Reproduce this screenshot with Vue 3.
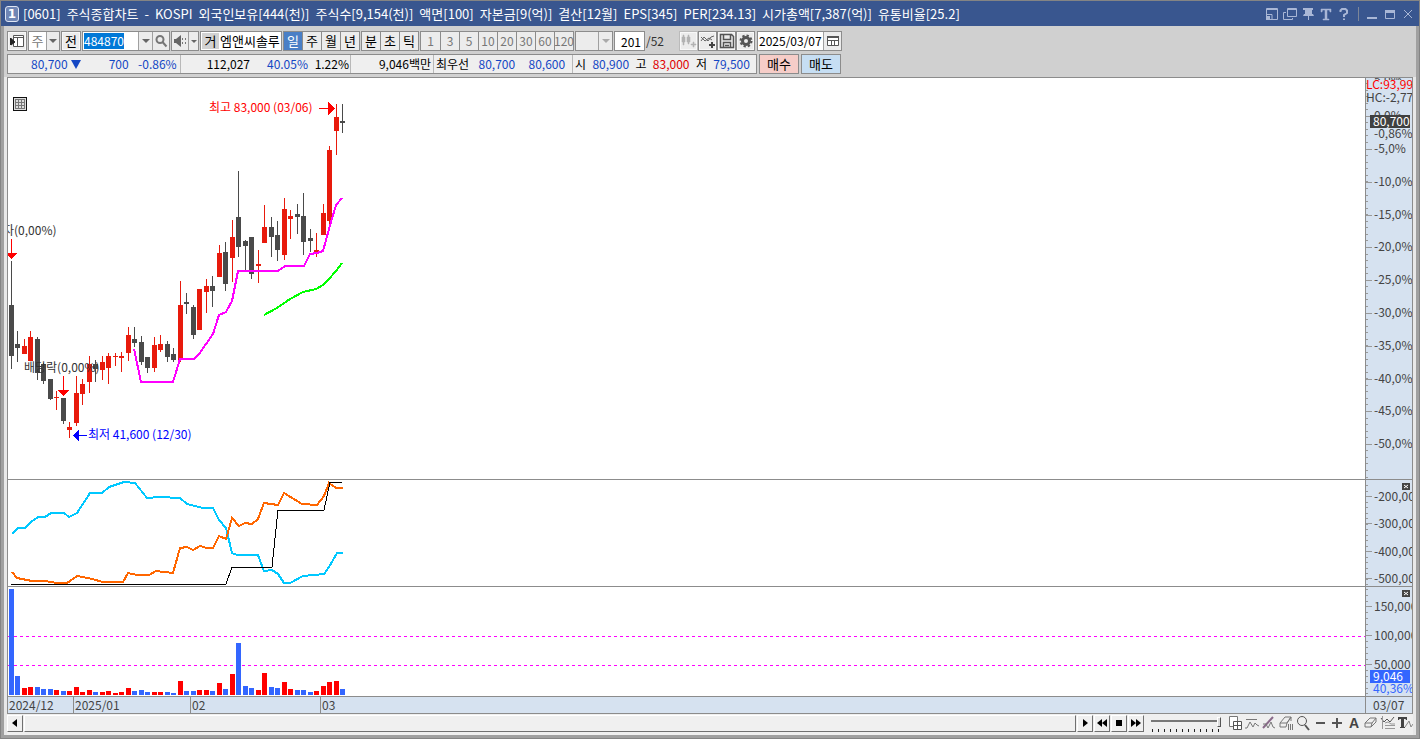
<script setup>
import { onMounted, ref } from 'vue'

const titleParts = [
  '[0601]', '주식종합차트', '-', 'KOSPI', '외국인보유[444(천)]', '주식수[9,154(천)]', '액면[100]',
  '자본금[9(억)]', '결산[12월]', 'EPS[345]', 'PER[234.13]', '시가총액[7,387(억)]', '유통비율[25.2]'
]
const periods = ['일', '주', '월', '년']
const ticks = ['분', '초', '틱']
const minutes = ['1', '3', '5', '10', '20', '30', '60', '120']

const code = ref('484870')
const codeBox = ref(null)
const dateValue = ref('2025/03/07')
const barCount = ref('201')
const zoomLevel = ref(100)

onMounted(() => {
  codeBox.value.focus()
  codeBox.value.select()
})

// [high, body top, body bottom, low, rising]
const candles = [
  [261, 305, 356, 369, 0], [331, 344, 348, 362, 0], [339, 346, 354, 354, 1], [331, 337, 361, 361, 1],
  [337, 339, 373, 380, 0], [363, 364, 381, 384, 0], [379, 379, 399, 400, 0], [391, 397, 398, 410, 1],
  [398, 398, 421, 424, 0], [422, 427, 430, 438, 1], [376, 393, 423, 426, 1], [379, 384, 394, 405, 1],
  [356, 364, 382, 393, 1], [360, 364, 369, 382, 0], [356, 362, 370, 380, 1], [353, 356, 368, 384, 1],
  [353, 356, 357, 366, 1], [352, 356, 358, 372, 1], [327, 335, 353, 361, 1], [327, 339, 343, 347, 0],
  [336, 342, 362, 365, 0], [357, 357, 368, 373, 0], [337, 345, 368, 372, 1], [335, 344, 350, 352, 1],
  [341, 344, 357, 362, 0], [348, 354, 360, 362, 0], [281, 305, 360, 362, 1], [293, 302, 304, 314, 0],
  [305, 307, 335, 339, 0], [289, 289, 330, 330, 1], [279, 286, 292, 313, 1], [276, 286, 291, 307, 0],
  [245, 253, 277, 277, 1], [242, 252, 284, 291, 0], [220, 237, 258, 282, 1], [171, 217, 247, 257, 0],
  [240, 241, 246, 270, 0], [237, 237, 274, 279, 0], [250, 264, 266, 283, 1], [205, 227, 243, 243, 1],
  [217, 227, 237, 257, 0], [221, 235, 250, 261, 0], [198, 209, 255, 260, 1], [210, 216, 219, 239, 1],
  [204, 214, 217, 234, 0], [193, 216, 242, 255, 0], [229, 238, 241, 252, 0], [233, 250, 252, 257, 1],
  [204, 213, 235, 235, 1], [146, 150, 221, 228, 1], [104, 117, 131, 155, 1], [104, 121, 123, 133, 0]
].map(([hi, top, bottom, lo, up], i) => ({ x: 11 + Math.floor(6.5 * i), hi, top, bottom, lo, fill: up ? '#e81a0c' : '#4a4a4a' }))

// top edge of each volume bar; negative marks a falling day
const volumes = [
  -589, -676, 688, 687, -687, -689, -689, 690, -691, 691, 687, 692, 690, -692, 692, 691, 693, 692, 688, -691,
  -690, -692, 692, 692, -692, -693, 681, -691, -691, 690, 690, -691, 683, -689, 674, -643, -686, -688, 690, 673,
  -687, -688, 682, 689, -690, -690, -692, 691, 686, 682, 681, -689
].map((v, i) => ({ x: 9 + Math.floor(6.5 * i), y: Math.abs(v), fill: v > 0 ? '#ff0000' : '#3366ff' }))

const percentMarks = [
  ['0,0%', 116], ['-5,0%', 149], ['-10,0%', 182], ['-15,0%', 215], ['-20,0%', 247], ['-25,0%', 280],
  ['-30,0%', 313], ['-35,0%', 346], ['-40,0%', 379], ['-45,0%', 411], ['-50,0%', 444]
]
const flowMarks = [['-200,000', 496], ['-300,000', 523], ['-400,000', 551], ['-500,000', 578]]
const volumeMarks = [['150,000', 606], ['100,000', 635], ['50,000', 664]]
const minor = (from, to, step) => {
  const out = []
  for (let y = from; y < to; y += step) out.push(Math.round(y))
  return out
}
const priceMinor = minor(83, 479, 6.56)
const flowMinor = minor(485, 586, 5.5)
const volumeMinor = minor(589, 695, 5.8)
</script>

<template>
  <main class="window">
    <header class="titlebar">
      <span class="badge">1</span>
      <h1 class="title"><span v-for="p in titleParts" :key="p">{{ p }}</span></h1>
      <div class="wincontrols">
        <button aria-label="크기 맞춤"><svg width="14" height="14"><path d="M1.5 1.5h11v11h-11zM1 2.5h12M1.5 7.500h5.500v5" fill="none" stroke="#a9b7d6" /><path d="M1 9h4v4H1z" fill="#a9b7d6" /></svg></button>
        <button aria-label="창 복제"><svg width="14" height="14"><path d="M4.500 1.500h9v8h-9zM4 2.500h9M3 5.500H.500v7h9V11" fill="none" stroke="#a9b7d6" /></svg></button>
        <button aria-label="고정"><svg width="14" height="14"><path d="M2 1h10v2h-1v4h1l1 2H8v4H7V9H2l1-2h1V3H2z" fill="#a9b7d6" /></svg></button>
        <button aria-label="글꼴"><svg width="14" height="14"><path d="M2 2h10v3h-1L10.500 3H8v9h2v1H4v-1h2V3H3.500L3 5H2z" fill="#a9b7d6" stroke="#a9b7d6" stroke-width=".5" /></svg></button>
        <button aria-label="도움말"><svg width="14" height="14"><path d="M3.500 5V3.500L5 2h3.500L10 3.500V6L7 8v2M7 11.500v1.500" fill="none" stroke="#a9b7d6" stroke-width="2" /></svg></button>
        <i class="sep"></i>
        <button aria-label="최소화"><svg width="14" height="14"><path d="M2 10h10v2H2z" fill="#a9b7d6" /></svg></button>
        <button aria-label="최대화"><svg width="14" height="14"><path d="M2.500 3.500h9v8h-9z" fill="none" stroke="#a9b7d6" /><path d="M2 3h10v3H2z" fill="#a9b7d6" /></svg></button>
        <button aria-label="닫기"><svg width="14" height="14"><path d="M3 3l8 8M11 3l-8 8" fill="none" stroke="#a9b7d6" /></svg></button>
      </div>
    </header>

    <div class="content">
      <section class="tools">
        <div class="row tight">
          <button class="box w20" aria-label="패널 열기"><svg width="16" height="14"><path d="M4.500 1.500h10v11h-10zM4 3.500h11M8.500 4v8" fill="#fff" stroke="#555" /><path d="M1.500 4v7M2 4.500L6 8l-4 3z" fill="#222" stroke="#222" /></svg></button>
          <div class="group">
            <button class="cell white grey w17">주</button>
            <button class="cell w13" aria-label="주기 목록"><i class="down"></i></button>
          </div>
          <button class="box w20">전</button>
          <div class="group">
            <input ref="codeBox" v-model="code" class="code" aria-label="종목코드">
            <button class="cell w14" aria-label="종목 목록"><i class="down"></i></button>
            <button class="cell w17" aria-label="종목 검색"><svg width="14" height="14"><circle cx="6" cy="5.500" r="3.500" fill="none" stroke="#777" stroke-width="2" /><path d="M8.500 8l4 4.500" stroke="#777" stroke-width="2" /></svg></button>
          </div>
          <div class="group">
            <button class="cell w16" aria-label="소리"><svg width="14" height="14"><path d="M1 5h2l5-4v12L3 9H1z" fill="#666" /><path d="M9.500 4v2M9.500 8v2M12.500 4v2M12.500 8v2" stroke="#777" /></svg></button>
            <button class="cell w10" aria-label="소리 설정"><i class="down small"></i></button>
          </div>
          <div class="group name"><span class="mark">거</span><span class="stock">엠앤씨솔루</span></div>
          <div class="group joined">
            <button v-for="(p, i) in periods" :key="p" class="cell w19" :class="{ on: i === 0 }">{{ p }}</button>
          </div>
          <div class="group joined">
            <button v-for="p in ticks" :key="p" class="cell w19">{{ p }}</button>
          </div>
          <div class="group minutes">
            <button v-for="p in minutes" :key="p" class="cell w19 grey">{{ p }}</button>
          </div>
          <div class="group">
            <span class="emptybox"></span>
            <button class="cell w14" aria-label="분 선택"><i class="down pale"></i></button>
          </div>
          <label class="count"><input v-model="barCount" aria-label="봉 개수"><span>/52</span></label>
          <div class="iconrow">
            <button class="box dim w19" aria-label="봉 추가"><svg width="16" height="14"><path d="M1 3h3v5H1zM6 3h3v5H6zM2 1h1v10H2zM7 1h1v9H7zM12 8h1v5h-1zM10 10h5v1h-5z" fill="#b2b2b2" stroke="#b2b2b2" stroke-width=".5" /></svg></button>
            <button class="box w19" aria-label="지표 추가"><svg width="16" height="14"><path d="M1 7l3-4 4 4 3-4 3-1M1 3l4 4 4-3 3 2" fill="none" stroke="#666" /><path d="M11 8h2v6h-2zM9 10h6v2H9z" fill="#444" /></svg></button>
            <button class="box w19" aria-label="저장"><svg width="16" height="16"><path d="M1.500 1.500h11l2 2v11h-13zM4.500 1.500v5h7v-5M4.500 14V9.500h7V14M6 12.500h4" fill="none" stroke="#555" stroke-width="1.500" /></svg></button>
            <button class="box w19" aria-label="설정"><svg width="14" height="14"><circle cx="7" cy="7" r="5.500" fill="none" stroke="#555" stroke-width="2" stroke-dasharray="2.300 2" /><circle cx="7" cy="7" r="3.500" fill="none" stroke="#555" stroke-width="3" /></svg></button>
          </div>
          <div class="group">
            <input v-model="dateValue" class="date" aria-label="기준일">
            <button class="cell w18" aria-label="달력"><svg width="12" height="12"><path d="M.500 1.500h11v9H.500zM1 5.500h10M4.500 5v5M7.500 5v5" fill="#fff" stroke="#555" /><path d="M0 1h12v2H0z" fill="#555" /></svg></button>
          </div>
        </div>

        <div class="row">
          <div class="quote">
            <div class="q q1"><span class="fell">80,700</span><i class="fall"></i><span class="fell r c48">700</span><span class="fell r c48">-0.86%</span></div>
            <div class="q q2"><span class="r c69">112,027</span><span class="fell r c58">40.05%</span><span class="r c41">1.22%</span></div>
            <div class="q q3"><span>9,046백만</span></div>
            <div class="q q4"><span>최우선</span><span class="fell r c45">80,700</span><span class="fell r c50">80,600</span></div>
            <div class="q q5"><span>시</span><span class="fell">80,900</span><span>고</span><span class="rose">83,000</span><span>저</span><span class="fell">79,500</span></div>
          </div>
          <button class="box trade buy">매수</button>
          <button class="box trade sell">매도</button>
        </div>
      </section>

      <section class="lower">
        <div class="chart">
          <svg class="panel" role="img" aria-label="가격 차트">
            <g transform="translate(-8 -78)">
              <g shape-rendering="crispEdges">
                <path d="M13 97h14v14H13z" fill="#111" /><path d="M14 98h12v12H14z" fill="#ddd" />
                <path d="M15.500 99.500h9v9h-9zM15 102.500h9M15 105.500h9M18.500 99v9M21.500 99v9" fill="none" stroke="#777" />
                <g v-for="c in candles" :key="c.x" :fill="c.fill">
                  <rect :x="c.x" :y="c.hi" width="1" :height="c.lo - c.hi" />
                  <rect :x="c.x - 2" :y="c.top" width="5" :height="c.bottom - c.top" />
                </g>
                <g fill="none" stroke-width="2">
                  <polyline stroke="#ff00ff" points="134,349 141,382 173,382 180,359 194,359 199,354 206,344 213,334 219,315 226,312 232,301 238,271 278,271 285,266 304,266 310,254 317,253 323,251 329,229 336,205 342,198" />
                  <polyline stroke="#00ff00" points="264,315 277,308 290,299 303,292 316,289 323,285 329,279 336,271 342,263" />
                </g>
                <path d="M11 239h1v14h5l-5 6h-1l-4-4v-2h4zM63 376h1v14h5l-5 6h-1l-5-6h5zM319 108h9v-6l7 6v1l-7 6v-6h-9z" fill="#ff0000" />
                <path d="M87 435h-8v-5l-6 5v1l6 5v-5h8z" fill="#0000ff" />
              </g>
              <text x="3" y="235" fill="#333">자(0,00%)</text>
              <text x="24" y="372" fill="#333">배당락(0,00%)</text>
              <text x="209" y="112" fill="#ff0000">최고 83,000 (03/06)</text>
              <text x="88" y="439" fill="#0000ff">최저 41,600 (12/30)</text>
            </g>
          </svg>
          <svg class="panel axis" role="img" aria-label="등락률 축">
            <g transform="translate(-1366 -78)">
              <g fill="#999">
                <rect v-for="y in priceMinor" :key="y" x="1366" :y="y" width="2" height="1" />
                <rect v-for="m in percentMarks" :key="m[0]" x="1366" :y="m[1]" width="6" height="1" />
              </g>
              <text x="1374" y="84">5,0%</text>
              <text v-for="m in percentMarks" :key="m[0]" x="1374" :y="m[1] + 4">{{ m[0] }}</text>
              <rect x="1367" y="80" width="45" height="10" fill="#d6e2f0" />
              <text x="1366" y="89" fill="#ff0000">LC:93,99</text>
              <text x="1366" y="102">HC:-2,77</text>
              <text x="1374" y="138">-0,86%</text>
              <rect x="1370" y="115" width="40" height="13" fill="#404040" />
              <text x="1373" y="126" fill="#fff">80,700</text>
            </g>
          </svg>

          <svg class="panel line" role="img" aria-label="수급 지표">
            <g transform="translate(-8 -480)" fill="none" stroke-width="2" shape-rendering="crispEdges">
              <polyline stroke="#00c8ff" points="12,534 18,528 25,528 31,522 38,517 45,517 51,513 64,513 69,517 77,513 90,493 102,493 109,487 124,482 135,483 147,498 160,497 180,498 187,504 203,508 213,508 219,520 226,528 232,553 237,555 258,555 264,571 272,570 278,574 284,583 290,583 303,576 324,574 329,567 337,553 343,553" />
              <polyline stroke="#ff6600" points="12,572 17,578 32,581 45,581 57,583 67,583 70,581 77,576 88,578 103,582 123,582 128,573 137,575 149,575 156,571 173,573 180,548 187,547 193,550 200,546 207,548 213,548 219,536 226,539 232,518 239,526 245,523 252,524 258,519 264,503 278,505 284,493 302,504 317,505 324,496 329,483 336,488 343,488" />
              <polyline stroke="#000" stroke-width="1" points="11,584 226,584 232,567 272,567 278,510 324,510 330,482 342,482" />
            </g>
          </svg>
          <svg class="panel axis line" role="img" aria-label="수급 축">
            <g transform="translate(-1366 -480)">
              <g fill="#999">
                <rect v-for="y in flowMinor" :key="y" x="1366" :y="y" width="2" height="1" />
                <rect v-for="m in flowMarks" :key="m[0]" x="1366" :y="m[1]" width="6" height="1" />
              </g>
              <text v-for="m in flowMarks" :key="m[0]" x="1374" :y="m[1] + 5">{{ m[0] }}</text>
              <path d="M1402 483h8v7h-8z" fill="#444" /><path d="M1404 485l4 3M1408 485l-4 3" stroke="#fff" />
            </g>
          </svg>

          <svg class="panel line" role="img" aria-label="거래량">
            <g shape-rendering="crispEdges">
              <line x1="0" y1="49" x2="100%" y2="49" stroke="#ff00ff" stroke-dasharray="3 3" />
              <line x1="0" y1="78" x2="100%" y2="78" stroke="#ff00ff" stroke-dasharray="3 3" />
              <g transform="translate(-8 -587)">
                <rect v-for="v in volumes" :key="v.x" :x="v.x" :y="v.y" width="5" :height="695 - v.y" :fill="v.fill" />
              </g>
            </g>
          </svg>
          <svg class="panel axis line" role="img" aria-label="거래량 축">
            <g transform="translate(-1366 -587)">
              <g fill="#999">
                <rect v-for="y in volumeMinor" :key="y" x="1366" :y="y" width="2" height="1" />
                <rect v-for="m in volumeMarks" :key="m[0]" x="1366" :y="m[1]" width="6" height="1" />
              </g>
              <text v-for="m in volumeMarks" :key="m[0]" x="1374" :y="m[1] + 5">{{ m[0] }}</text>
              <text x="1373" y="693" class="share">40,36%</text>
              <rect x="1370" y="670" width="40" height="13" fill="#3366ff" />
              <text x="1373" y="681" fill="#fff">9,046</text>
              <path d="M1402 590h8v7h-8z" fill="#444" /><path d="M1404 592l4 3M1408 592l-4 3" stroke="#fff" />
            </g>
          </svg>

          <div class="dates line"><span class="d1">2024/12</span><span class="d2">2025/01</span><span class="d3">02</span><span class="d4">03</span></div>
          <div class="dates corner line">03/07</div>
        </div>

        <div class="bottom">
          <div class="scroll">
            <button class="raised" aria-label="왼쪽으로"><svg width="8" height="10"><path d="M6 1v8L1 5z" fill="#000" /></svg></button>
            <div class="thumb"></div>
            <button class="raised" aria-label="오른쪽으로"><svg width="8" height="10"><path d="M2 1v8l5-4z" fill="#000" /></svg></button>
          </div>
          <button class="raised" aria-label="뒤로 재생"><svg width="10" height="10"><path d="M5 1v8L0 5zM10 1v8L5 5z" fill="#000" /></svg></button>
          <button class="raised" aria-label="정지"><svg width="8" height="10"><path d="M1 2h6v6H1z" fill="#000" /></svg></button>
          <button class="raised" aria-label="앞으로 재생"><svg width="10" height="10"><path d="M0 1v8l5-4zM5 1v8l5-4z" fill="#000" /></svg></button>
          <div class="slider"><input v-model="zoomLevel" type="range" min="0" max="100" aria-label="확대 비율"></div>
          <div class="chart-tools">
            <button aria-label="화면 분할"><svg width="16" height="16"><path d="M2.500 1.500h8v10h-8z" fill="#fff" stroke="#777" /><path d="M6.500 6.500h8v8h-8zM10.500 6v9M6 10.500h9" fill="#fff" stroke="#555" /></svg></button>
            <button aria-label="수평선"><svg width="16" height="16"><path d="M2 4.500h11M1 13h2l3-6 3 5 2-4 2 2 2 1" fill="none" stroke="#777" /></svg></button>
            <button aria-label="추세선"><svg width="16" height="16"><path d="M2 13L12 2" stroke="#8a6a8a" stroke-width="2" /><path d="M2 9h3l2 4 3-6 2 5 2 1" fill="none" stroke="#777" /></svg></button>
            <button aria-label="전체 지우기"><svg width="16" height="16"><path d="M2 8l5-6h6l-4 6zM2 8v4h6l1-4M9 8l4-6v4M10.500 9v6M12.500 9v6M14.500 9v6" fill="none" stroke="#777" /></svg></button>
            <button aria-label="돋보기"><svg width="16" height="16"><circle cx="7" cy="6" r="4.500" fill="none" stroke="#555" /><path d="M10 10l4 5" stroke="#555" stroke-width="2" /></svg></button>
            <button aria-label="축소"><svg width="16" height="16"><path d="M4 7h9v2H4z" fill="#555" /></svg></button>
            <button aria-label="확대"><svg width="16" height="16"><path d="M3 7h4V3h2v4h4v2H9v4H7V9H3z" fill="#555" /></svg></button>
            <button class="letter">A</button>
            <button aria-label="지우개"><svg width="16" height="16"><path d="M2 8l5-5h6L9 8zM2 8v4h6l1-4M8 12l5-5V3" fill="none" stroke="#777" /></svg></button>
            <button aria-label="지표 목록"><svg width="16" height="16"><path d="M1 3l3 4 3-3 3 3 4-5" fill="none" stroke="#555" /><path d="M2.500 1v13M5 8l3-1 3 2h4M5 10.500h10M5 13.500h10" fill="none" stroke="#999" /></svg></button>
            <button aria-label="문자 표시"><svg width="16" height="16"><path d="M8 12l4-6 2 6 2-3" fill="none" stroke="#888" /><path d="M1 2h9v3H9L8.500 4H7v8h1v1H3v-1h1V4H2.500L2 5H1z" fill="#444" /></svg></button>
          </div>
        </div>
      </section>
    </div>
  </main>
</template>

<style>
body { background: #d0d0d0; }
</style>

<style scoped>
.window, .window button, .window input {
  font-family: "Noto Sans CJK KR", sans-serif;
  font-size: 13px;
  line-height: 16px;
}
.window { box-sizing: border-box; display: flex; flex-direction: column; min-height: 100vh; border: 1px solid #848484; background: #d0d0d0; color: #000; }
.window * { box-sizing: border-box; }
button { display: flex; align-items: center; justify-content: center; flex: none; margin: 0; padding: 0; border: 0; background: none; color: #000; white-space: nowrap; }
input { margin: 0; padding: 0; border: 0; outline: 0; background: #fff; min-width: 0; }
svg { display: block; flex: none; }

.titlebar { display: flex; align-items: center; height: 25px; padding: 0 4px; background: #39568f; color: #fff; }
.badge { width: 14px; height: 16px; border: 1px solid #dfe6f4; border-radius: 3px; background: #6f86b5; font: bold 12px/14px "DejaVu Sans", sans-serif; text-align: center; }
.title { display: flex; flex: 1; gap: 6px; margin: 0 0 0 4px; font-size: 13px; font-weight: 400; white-space: nowrap; }
.wincontrols { display: flex; align-items: center; gap: 4px; }
.wincontrols button { width: 14px; height: 16px; }
.sep { width: 1px; height: 14px; margin: 0 2px 0 3px; background: #7d8698; }

.content { display: flex; flex: 1; flex-direction: column; border: solid #a0a0a0; border-width: 0 3px 3px; }
.tools { display: flex; flex-direction: column; gap: 3px; padding: 5px 3px 3px; }
.row { display: flex; gap: 2px; height: 20px; }
.tight { gap: 1px; }
.box, .group { flex: none; height: 20px; border: 1px solid #8c8c8c; background: #ececec; }
.box { box-shadow: inset 0 0 0 1px #f8f8f8; }
.group { display: flex; }
.cell { height: 18px; border-left: 1px solid #a0a0a0; background: #ececec; }
.cell:first-child { border-left: 0; }
.w10 { width: 10px; } .w13 { width: 13px; } .w14 { width: 14px; } .w16 { width: 16px; } .w17 { width: 17px; } .w18 { width: 18px; } .w19 { width: 19px; } .w20 { width: 20px; }
.window .white { background: #fff; }
.window .grey { color: #777; }
.window .on { background: #4a7fc6; color: #fff; }
.joined { border-right: 0; }
.joined .cell { border-left: 0; border-right: 1px solid #8c8c8c; }
.window .minutes .cell { border-left-color: #8c8c8c; font-size: 12px; }
.minutes .cell:first-child { border-left: 0; }
.down { border: 4px solid transparent; border-top-color: #666; border-bottom: 0; }
.small { border-width: 3px; border-bottom: 0; }
.pale { border-top-color: #aaa; }
.window .code { width: 55px; padding-left: 1px; font-size: 12px; }
.code::selection { background: #0078d7; color: #fff; }
.name { width: 82px; background: #fff; padding: 1px; white-space: nowrap; }
.mark { width: 17px; background: #d2d2d2; text-align: center; }
.stock { margin-left: 1px; }
.emptybox { width: 22px; }
.count { display: flex; align-items: center; width: 64px; }
.window .count input { width: 31px; height: 20px; margin-right: 1px; padding-right: 3px; border: 1px solid #8c8c8c; font-size: 12px; text-align: right; }
.count span { font-size: 12px; color: #333; }
.iconrow { display: flex; margin-right: 1px; }
.dim { border-color: #bbb; }
.window .date { width: 65px; padding-left: 1px; font-size: 12px; }

.quote { display: flex; width: 750px; border: 1px solid #8c8c8c; background: #efefef; font-size: 12px; line-height: 18px; white-space: nowrap; }
.q { display: flex; align-items: center; border-right: 1px solid #b8b8b8; }
.q:last-child { border-right: 0; }
.q1 { width: 173px; padding-left: 23px; }
.q2 { width: 170px; }
.q3 { width: 83px; justify-content: flex-end; padding-right: 2px; }
.q4 { width: 139px; padding-left: 2px; }
.q5 { flex: 1; justify-content: space-between; padding: 0 6px 0 2px; }
.r { text-align: right; }
.c48 { width: 48px; } .c69 { width: 69px; } .c58 { width: 58px; } .c41 { width: 41px; } .c45 { width: 46px; } .c50 { width: 50px; }
.fell { color: #1447c4; }
.rose { color: #e00000; }
.fall { margin-left: 3px; border: 5px solid transparent; border-top: 9px solid #1447c4; border-bottom: 0; }
.trade { width: 40px; }
.buy { background: #f6cdc8; box-shadow: none; }
.sell { background: #c6def3; box-shadow: none; }

.lower { display: flex; flex: 1; flex-direction: column; padding: 0 3px; background: #e8e8e8; }
.chart { display: grid; flex: 1; grid-template-columns: minmax(0, 1fr) 47px; grid-template-rows: minmax(401px, 1fr) 107px 110px 17px; border: 1px solid #8c8c8c; background: #fff; font-size: 12px; }
.panel { width: 100%; height: 100%; overflow: hidden; }
.axis { border-left: 1px solid #8c8c8c; background: #d6e2f0; fill: #444; }
.share { fill: #3366ff; }
.line { border-top: 1px solid #8c8c8c; }
.dates { display: flex; background: #d6e2f0; color: #444; line-height: 16px; }
.dates span { padding-left: 1px; border-left: 1px solid #8c8c8c; }
.dates .d1 { width: 65px; border-left: 0; }
.d2 { width: 117px; }
.d3 { width: 130px; }
.corner { padding-left: 7px; border-left: 1px solid #8c8c8c; }

.bottom { display: flex; align-items: center; gap: 1px; height: 21px; padding-bottom: 3px; background: #efefef; }
.scroll { display: flex; flex: 1; gap: 1px; }
.raised, .thumb { height: 17px; border: 1px solid; border-color: #fff #707070 #707070 #fff; background: #f0f0f0; }
.raised { width: 16px; }
.thumb { flex: 1; }
.slider { width: 72px; height: 17px; margin-left: 5px; padding: 2px 0 0 1px; background: repeating-linear-gradient(90deg, transparent 0 2px, #222 2px 3px, transparent 3px 6px) 0 100% / 100% 3px no-repeat; }
.slider input { display: block; width: 70px; height: 10px; appearance: none; background: linear-gradient(#777, #777) 0 3px / 66px 2px no-repeat; }
.slider input::-webkit-slider-thumb { appearance: none; width: 4px; height: 10px; border: 1px solid; border-color: #fff #555 #555 #fff; background: #ddd; }
.chart-tools { display: flex; gap: 1px; margin-left: 4px; }
.chart-tools button { width: 16px; height: 17px; }
.window .letter { color: #444; font: bold 14px/16px "Liberation Sans", sans-serif; }
</style>
